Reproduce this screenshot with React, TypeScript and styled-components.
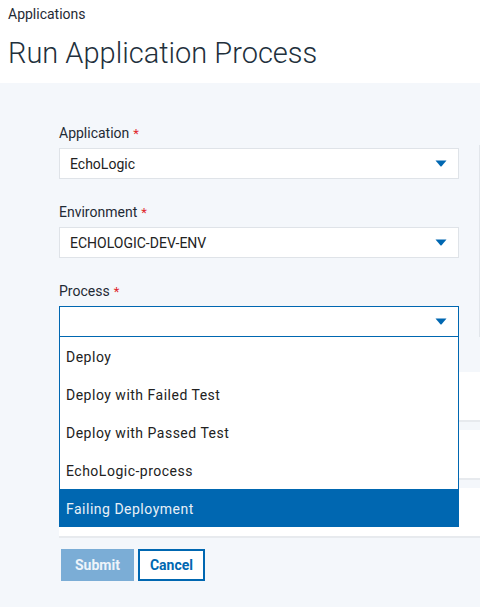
import styled, { createGlobalStyle } from 'styled-components';

const GlobalStyle = createGlobalStyle`
  html, body {
    margin: 0;
    padding: 0;
    background: #ffffff;
    font-family: Roboto, "Liberation Sans", Arial, sans-serif;
    overflow: hidden;
  }
  * {
    box-sizing: border-box;
  }
`;

const BLUE = '#0067b1';

const Page = styled.div`
  display: flex;
  flex-flow: column;
  min-height: 607px;
`;

const Header = styled.header`
  height: 83px;
  padding: 6px 8px 0;
  background: #ffffff;
`;

const Breadcrumb = styled.div`
  font-size: 14px;
  line-height: 16px;
  color: #1f2a35;
`;

const Title = styled.h1`
  margin: 14px 0 0;
  font-size: 29px;
  line-height: 34px;
  font-weight: 300;
  color: #22303c;
`;

const Main = styled.main`
  flex: 1;
  background: #f4f7fb;
  padding: 42px 0 0 59px;
`;

const TopRow = styled.div`
  display: flex;
`;

const FormColumn = styled.div`
  width: 400px;
  display: flex;
  flex-flow: column;
  gap: 25px;
`;

const SidePanel = styled.div`
  flex: 1;
  margin: 20px 0 0 20px;
  border-left: 1px solid #e2e6eb;
  height: 192px;
`;

const Field = styled.div`
  position: relative;
  display: flex;
  flex-flow: column;
`;

const Label = styled.label`
  font-size: 14px;
  line-height: 17px;
  color: #1f2a35;
  margin-bottom: 6px;
`;

const Required = styled.span`
  color: #e0262b;
  margin-left: 4px;
  font-size: 13px;
`;

const SelectBox = styled.div<{ $open?: boolean }>`
  display: flex;
  align-items: center;
  justify-content: space-between;
  height: 31px;
  padding: 0 11px 0 10px;
  background: #ffffff;
  border: 1px solid ${(p) => (p.$open ? BLUE : '#dfe3e8')};
  font-size: 14px;
  color: #222;
`;

const Menu = styled.ul`
  position: absolute;
  left: 0;
  right: 0;
  top: 100%;
  margin: 0;
  padding: 0;
  list-style: none;
  background: #ffffff;
  border: 1px solid ${BLUE};
  border-top: none;
  z-index: 2;
`;

const MenuItem = styled.li<{ $selected?: boolean }>`
  height: 38px;
  display: flex;
  align-items: center;
  padding-top: 1px;
  font-size: 14px;
  letter-spacing: 0.5px;
  color: ${(p) => (p.$selected ? '#e8f0f7' : '#222')};
  background: ${(p) => (p.$selected ? BLUE : 'transparent')};
  margin: ${(p) => (p.$selected ? '0 -1px -1px' : '0')};
  padding-left: ${(p) => (p.$selected ? '7px' : '6px')};
`;

const RowList = styled.div`
  margin-top: 35px;
  display: flex;
  flex-flow: column;
  gap: 8px;
`;

const Row = styled.div`
  height: 50px;
  background: #ffffff;
  border-bottom: 2px solid #e7eaee;
`;

const Actions = styled.div`
  display: flex;
  gap: 4px;
  margin: 11px 0 0 2px;
`;

const Button = styled.button<{ $variant: 'primary' | 'outline' }>`
  height: 32px;
  padding: 0 ${(p) => (p.$variant === 'primary' ? '12px' : '10px')};
  font-family: Roboto, "Liberation Sans", Arial, sans-serif;
  font-size: 14px;
  font-weight: 700;
  border: 2px solid ${(p) => (p.$variant === 'primary' ? 'transparent' : BLUE)};
  background: ${(p) => (p.$variant === 'primary' ? '#7badd6' : '#ffffff')};
  color: ${(p) => (p.$variant === 'primary' ? '#eef4fa' : BLUE)};
`;

function Caret() {
  return (
    <svg width="12" height="7" viewBox="0 0 12 7">
      <path d="M0.5 0.5 H11.5 L6.6 6.3 Q6 6.9 5.4 6.3 Z" fill={BLUE} />
    </svg>
  );
}

const processes = [
  'Deploy',
  'Deploy with Failed Test',
  'Deploy with Passed Test',
  'EchoLogic-process',
  'Failing Deployment',
];

function App() {
  return (
    <Page>
      <GlobalStyle />
      <Header>
        <Breadcrumb>Applications</Breadcrumb>
        <Title>Run Application Process</Title>
      </Header>
      <Main>
        <TopRow>
          <FormColumn>
            <Field>
              <Label>
                Application<Required>*</Required>
              </Label>
              <SelectBox>
                EchoLogic
                <Caret />
              </SelectBox>
            </Field>
            <Field>
              <Label>
                Environment<Required>*</Required>
              </Label>
              <SelectBox>
                ECHOLOGIC-DEV-ENV
                <Caret />
              </SelectBox>
            </Field>
            <Field>
              <Label>
                Process<Required>*</Required>
              </Label>
              <SelectBox $open>
                <span />
                <Caret />
              </SelectBox>
              <Menu>
                {processes.map((name) => (
                  <MenuItem key={name} $selected={name === 'Failing Deployment'}>
                    {name}
                  </MenuItem>
                ))}
              </Menu>
            </Field>
          </FormColumn>
          <SidePanel />
        </TopRow>
        <RowList>
          <Row />
          <Row />
          <Row />
        </RowList>
        <Actions>
          <Button $variant="primary">Submit</Button>
          <Button $variant="outline">Cancel</Button>
        </Actions>
      </Main>
    </Page>
  );
}

export default App;
